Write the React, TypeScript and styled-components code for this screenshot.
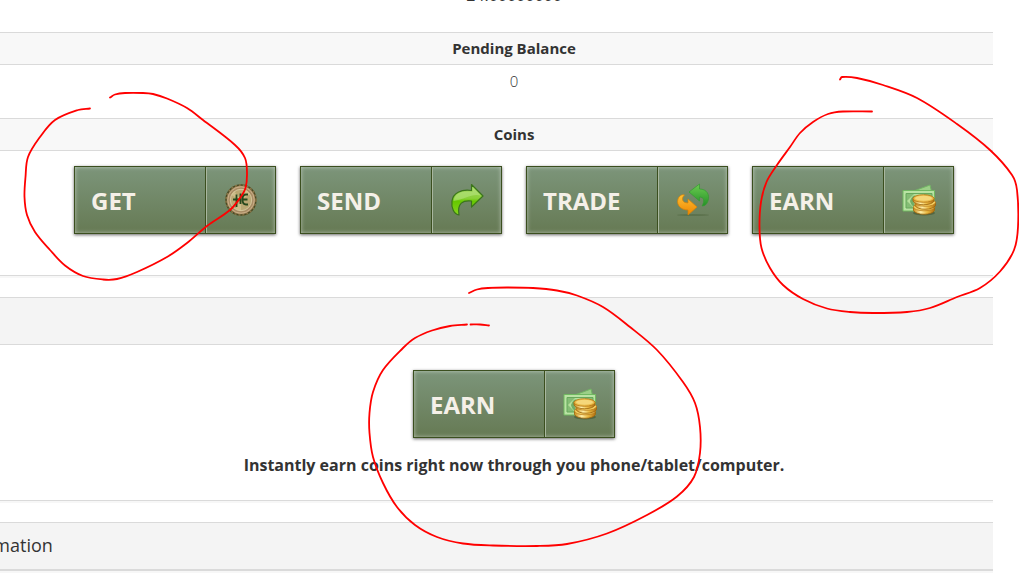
import React from 'react';
import styled, { createGlobalStyle } from 'styled-components';

const Global = createGlobalStyle`
  * { box-sizing: border-box; }
  html, body { margin: 0; background: #fff; overflow: hidden; }
  body { font-family: "Open Sans", "Noto Sans", sans-serif; font-size: 15px; line-height: 20px; color: #333; }
  h2, p { margin: 0; }
`;

const Page = styled.main`
  display: flow-root;
  position: relative;
  padding-right: 26px;
`;

const Panel = styled.section`
  border-bottom: 1px solid #dadada;
  box-shadow: 0 2px 0 #f7f7f7;
  margin-bottom: 21px;
`;

const Total = styled.p`
  margin-top: -17px;
  padding: 0 0 25px 35px;
  text-align: center;
  font-size: 16px;
  line-height: 24px;
`;

const RowHeading = styled.h2`
  padding: 6px 0 6px 35px;
  border-top: 1px solid #dadada;
  border-bottom: 1px solid #dadada;
  background: #f8f8f8;
  text-align: center;
  font-size: 15px;
  font-weight: 700;
  line-height: 19px;
`;

const Amount = styled.p`
  padding: 6px 0 27px 35px;
  text-align: center;
  font-weight: 300;
`;

const Actions = styled.div<{ $pad: string }>`
  display: flex;
  justify-content: center;
  gap: 24px;
  padding: ${(p) => p.$pad};
`;

const PanelTitle = styled.h2`
  height: 48px;
  padding: 10px 0;
  border-top: 1px solid #dadada;
  border-bottom: 1px solid #dadada;
  background: #f4f4f4;
  font-size: 18px;
  font-weight: 400;
  line-height: 24px;
`;

const Note = styled.p`
  padding: 16px 0 24px 35px;
  text-align: center;
  font-size: 16px;
  font-weight: 700;
  line-height: 22px;
`;

const CoinButton = styled.button`
  display: flex;
  width: 202px;
  height: 68px;
  padding: 0;
  border: 1px solid #3b4f1f;
  background: linear-gradient(#7c957a, #667a54);
  box-shadow: inset 0 0 4px rgba(255, 255, 255, 0.5), 0 1px 3px rgba(0, 0, 0, 0.6);
  color: #f5f0e8;
  font: 700 24px/66px "Open Sans", sans-serif;
  text-align: left;
  cursor: pointer;
`;

const ButtonLabel = styled.span`
  flex: 1;
  padding: 1px 0 0 16px;
  height: 66px;
`;

const ButtonIcon = styled.span`
  display: flex;
  align-items: center;
  justify-content: center;
  width: 70px;
  height: 66px;
  border-left: 1px solid #3b4f1f;
  box-shadow: inset 1px 0 0 #a9b79f;
`;

const Marks = styled.svg`
  position: absolute;
  left: 0;
  top: 0;
  pointer-events: none;
`;

const CoinIcon = () => (
  <svg width="34" height="34" viewBox="0 0 34 34" aria-hidden="true">
    <circle cx="17" cy="17" r="15" fill="#a88c64" stroke="#4a4a24" strokeWidth="1.5" />
    <circle cx="17" cy="17" r="15" fill="none" stroke="#8a7748" strokeWidth="1.5" strokeDasharray="2 2" />
    <circle cx="17" cy="17" r="13.2" fill="none" stroke="#c9ae87" strokeWidth="1" />
    <circle cx="17" cy="17" r="10.7" fill="#baa873" stroke="#d4c69c" />
    <path d="M17 17 7 12 10 8zM17 17 22 7 26 11zM17 17 17 28 11 26z" fill="#d8ca98" opacity=".6" />
    <path d="M12.500 11.500V24M9 16.500h8M16.500 10.500V21M24 11.500h-2c-3 0-3.500 3-3.500 5s.5 5 3.500 5h2M18.500 16.500H23.500" fill="none" stroke="#27481c" strokeWidth="1.800" />
  </svg>
);

const SendIcon = () => (
  <svg width="34" height="34" viewBox="0 0 34 34" aria-hidden="true">
    <defs>
      <linearGradient id="send" x1="0" y1="0" x2="0" y2="1">
        <stop offset="0" stopColor="#a0d45e" /><stop offset=".45" stopColor="#8bd03a" />
        <stop offset=".55" stopColor="#66c800" /><stop offset="1" stopColor="#85d51d" />
      </linearGradient>
    </defs>
    <path d="M21.500 1.500 33 13 21.500 24V18C13 17 7 20 9 32 4 31 1 25 2 18 3 10 11 6 21.500 7.500z" fill="url(#send)" stroke="#3b751b" strokeWidth="1.200" strokeLinejoin="round" />
    <path d="M22.500 4 31 12.500C22 10 15 16 3.500 18 5 10 12 7.500 22.500 9z" fill="#c4e995" opacity=".45" />
  </svg>
);

const TradeIcon = () => (
  <svg width="34" height="34" viewBox="0 0 34 34" aria-hidden="true">
    <defs>
      <linearGradient id="green" x1="0" y1="0" x2="0" y2="1"><stop stopColor="#6ccc51" /><stop offset="1" stopColor="#259127" /></linearGradient>
      <linearGradient id="orange" x1="0" y1="0" x2="0" y2="1"><stop stopColor="#ffc034" /><stop offset="1" stopColor="#ee8500" /></linearGradient>
    </defs>
    <ellipse cx="17" cy="32" rx="16" ry="1" fill="#40552f" opacity=".35" />
    <path d="M13 9 23.500 1V6C31 6 34 12 32 18 31 21 29 23 26 23 29 18 28 14 23.500 14V18z" fill="url(#green)" stroke="#349b30" strokeWidth=".7" />
    <path d="M21 24 12 32V27C5 27 0 22 2 16 3 13 6 11 8.500 12 5 15 6 20 12 20V16z" fill="url(#orange)" stroke="#db8200" strokeWidth=".7" />
  </svg>
);

const MoneyIcon = () => (
  <svg width="34" height="34" viewBox="0 0 34 34" aria-hidden="true">
    <defs>
      <linearGradient id="gold"><stop stopColor="#c98b1b" /><stop offset=".35" stopColor="#fff0aa" /><stop offset=".65" stopColor="#e9b840" /><stop offset="1" stopColor="#ad6c11" /></linearGradient>
    </defs>
    <path d="M9 9 28 2 31 15 16 19z" fill="#9ccf88" stroke="#72b465" />
    <path d="M1 7.500H32.500V28H1z" fill="#b9e3a3" stroke="#70b861" />
    <path d="M4 10.500H30V25H4z" fill="#85bd75" stroke="#67a85c" />
    <path d="M5 18 12 11H22L17 25H12z" fill="#b5df9b" />
    <path d="M8 18q3-7 6-5-4 4-1 11-4-1-5-6" fill="#70ad65" />
    <ellipse cx="22" cy="30" rx="11" ry="2.500" fill="#34451f" opacity=".45" />
    <path d="M11.500 24v3.500c2 5 19 5 21 0V24z" fill="url(#gold)" stroke="#9c650e" strokeWidth=".8" />
    <ellipse cx="22" cy="24" rx="10.500" ry="3.800" fill="#f4cf62" stroke="#b57617" strokeWidth=".7" />
    <path d="M13 19.500v3c2 5 18 5 20.500 0v-3z" fill="url(#gold)" stroke="#9c650e" strokeWidth=".8" />
    <ellipse cx="23.200" cy="19.500" rx="10.300" ry="3.800" fill="#f4cf62" stroke="#b57617" strokeWidth=".7" />
    <path d="M11 15v3c2 5 19 5 21 0v-3z" fill="url(#gold)" stroke="#9c650e" strokeWidth=".8" />
    <ellipse cx="21.500" cy="15.500" rx="10.500" ry="3.800" fill="#eabb49" stroke="#b57617" strokeWidth=".8" />
    <ellipse cx="21.500" cy="15.300" rx="8.500" ry="2.500" fill="#f5d77a" />
  </svg>
);

const ActionButton = ({ label, children }: { label: string; children: React.ReactNode }) => (
  <CoinButton type="button">
    <ButtonLabel>{label}</ButtonLabel>
    <ButtonIcon>{children}</ButtonIcon>
  </CoinButton>
);

const ScrolledTitle = styled.span`
  display: block;
  margin-left: -47px;
`;

type Point = [number, number];

// Pen strokes, each a list of the points the pen passed through.
const strokes: Point[][] = [
  [[90, 108.5], [78, 110], [55, 120], [40, 137], [28, 157], [25.5, 177], [24.5, 197], [27, 215], [35, 232], [50, 250], [65, 265.5], [83, 276], [103, 279.5], [117, 279], [137, 272], [167, 257], [187, 243], [207, 226], [230, 210], [240, 198], [245.5, 188], [247, 173], [245, 158], [235, 145], [203, 120], [187, 108], [167, 98.5], [153, 94], [143, 93], [125, 93], [115, 94.5], [110, 97.5]],
  [[872, 111.5], [843, 111.5], [828, 114], [813, 122], [800, 133], [790, 147], [777, 165], [766.5, 182], [761, 202], [759.5, 227], [761.5, 248], [770, 268], [783, 285], [803, 299], [827, 308.5], [850, 312], [873, 313], [907, 312], [930, 308], [957, 297], [980, 288], [1000, 271.5], [1014, 250], [1018, 227], [1017, 190], [1012, 175], [990, 150], [957, 124], [917, 98], [883, 85], [857, 78], [842, 77], [840, 79.5]],
  [[489, 325.5], [480, 324.5], [470.5, 324.5]],
  [[467, 324.5], [450, 326], [432, 330.5], [415, 338], [403, 348], [383, 370], [373, 392], [369.5, 413], [369.5, 433], [373, 457], [383, 483], [397, 507], [415, 525], [437, 537], [463, 543.5], [493, 545.5], [537, 546], [567, 544], [607, 533.5], [647, 515], [677, 496.5], [694, 477], [700, 453], [700, 427], [695, 403], [683, 382], [657, 350], [630, 327], [603, 307], [577, 295.5], [557, 290.5], [533, 288], [507, 287.5], [488, 288], [477, 289.5], [469, 293]],
];

const smoothPath = (pts: Point[]) => {
  let d = `M${pts[0].join(' ')}`;
  for (let i = 0; i < pts.length - 1; i++) {
    const a = pts[Math.max(i - 1, 0)];
    const b = pts[i];
    const c = pts[i + 1];
    const e = pts[Math.min(i + 2, pts.length - 1)];
    const reach = Math.hypot(c[0] - b[0], c[1] - b[1]) / 3;
    const inLen = Math.hypot(c[0] - a[0], c[1] - a[1]);
    const outLen = Math.hypot(e[0] - b[0], e[1] - b[1]);
    const x1 = b[0] + ((c[0] - a[0]) / inLen) * reach;
    const y1 = b[1] + ((c[1] - a[1]) / inLen) * reach;
    const x2 = c[0] - ((e[0] - b[0]) / outLen) * reach;
    const y2 = c[1] - ((e[1] - b[1]) / outLen) * reach;
    d += `C${x1} ${y1} ${x2} ${y2} ${c[0]} ${c[1]}`;
  }
  return d;
};

export default function App() {
  return (
    <>
      <Global />
      <Page>
        <Panel>
          <Total>24.00000000</Total>
          <RowHeading>Pending Balance</RowHeading>
          <Amount>0</Amount>
          <RowHeading>Coins</RowHeading>
          <Actions $pad="15px 0 41px 35px">
            <ActionButton label="GET"><CoinIcon /></ActionButton>
            <ActionButton label="SEND"><SendIcon /></ActionButton>
            <ActionButton label="TRADE"><TradeIcon /></ActionButton>
            <ActionButton label="EARN"><MoneyIcon /></ActionButton>
          </Actions>
        </Panel>
        <Panel>
          <PanelTitle />
          <Actions $pad="25px 0 0 35px">
            <ActionButton label="EARN"><MoneyIcon /></ActionButton>
          </Actions>
          <Note>Instantly earn coins right now through you phone/tablet/computer.</Note>
        </Panel>
        <Panel>
          <PanelTitle><ScrolledTitle>Information</ScrolledTitle></PanelTitle>
        </Panel>
        <Marks width="1019" height="574" viewBox="0 0 1019 574" fill="none" stroke="#f00" strokeWidth="1.800" strokeLinecap="round" strokeLinejoin="round" aria-hidden="true">
          {strokes.map((pts, i) => <path key={i} d={smoothPath(pts)} />)}
        </Marks>
      </Page>
    </>
  );
}
